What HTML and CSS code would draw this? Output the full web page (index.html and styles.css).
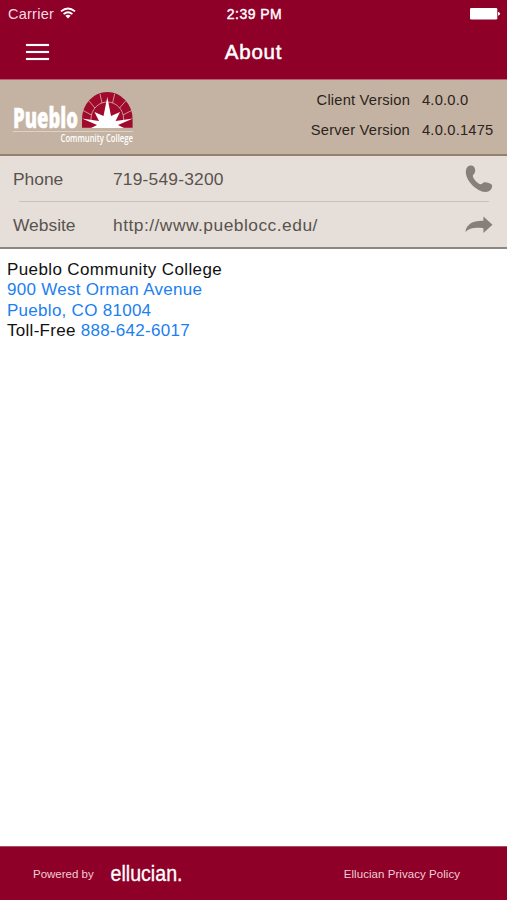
FILE: index.html
```html
<!DOCTYPE html>
<html lang="en">
<head>
    <meta charset="UTF-8">
    <meta name="viewport" content="width=device-width, initial-scale=1.0">
    <title>About</title>
    <link rel="stylesheet" href="styles.css">
</head>
<body>

<header class="top">
    <div class="status">
        <div class="carrier">
            <span class="carrier-name">Carrier</span>
            <svg class="wifi" width="16" height="12" viewBox="0 0 16 12" fill="none" stroke="#fff" stroke-width="1.9">
                <path d="M1 4.4 Q8 -1.6 15 4.4"/>
                <path d="M3.6 7.1 Q8 3.3 12.4 7.1"/>
                <path d="M8 11.4 L5.4 8.8 Q8 6.9 10.6 8.8 Z" fill="#fff" stroke="none"/>
            </svg>
        </div>
        <span class="time">2:39 PM</span>
        <svg class="battery" width="31" height="12" viewBox="0 0 31 12" fill="#fff">
            <rect x="0" y="0" width="27.3" height="11.6" rx="1.3"/>
            <path d="M28 3.8 Q30.2 4.6 30.2 5.8 Q30.2 7 28 7.8 Z"/>
        </svg>
    </div>
    <div class="nav">
        <div class="menu"><i></i><i></i><i></i></div>
        <h1>About</h1>
    </div>
</header>

<section class="banner">
    <svg class="logo" width="130" height="66" viewBox="0 0 130 66">
        <text class="logo-name" x="2" y="41.5" textLength="65" lengthAdjust="spacingAndGlyphs">Pueblo</text>
        <path d="M71 41.7 V33 A25.3 27 0 0 1 121.6 33 V41.7 Z" fill="#a00a2c"/>
        <g fill="none" stroke="#d6b9b0" stroke-width="0.8">
            <path d="M80 36 V33 A16.3 17 0 0 1 112.6 33 V36"/>
            <path d="M91 17 L89 8 M101.6 17 L103.6 8 M84 22 L77.5 14.5 M108.6 22 L115 14.5 M80.5 29 L72 24.5 M112 29 L120.6 24.5"/>
        </g>
        <path d="M80 41.9 L86 39 L71 32.5 L88 35 L83.5 26 L92.5 30 L96.3 11 L100 30 L109 26 L104.6 35 L122 32.5 L107 39 L113 41.9 Z" fill="#fff"/>
        <path d="M2 45.5 H122" stroke="#ddd0c4" stroke-width="1"/>
        <text class="logo-sub" x="49.5" y="55.5" textLength="72.5" lengthAdjust="spacingAndGlyphs">Community College</text>
    </svg>
    <div class="versions">
        <span class="label client">Client Version</span><span class="client-no">4.0.0.0</span>
        <span class="label server">Server Version</span><span class="server-no">4.0.0.1475</span>
    </div>
</section>

<section class="contact">
    <div class="row">
        <span class="name phone">Phone</span>
        <span class="value phone-no">719-549-3200</span>
        <svg width="28" height="30" viewBox="0 0 28 30" fill="#86807a">
            <path d="M2.2 3.2 C3.5 1.2 7.2 .8 8.8 2.5 C10.3 4.2 10.6 7 9.8 8.8 C9 10.3 7.7 10.9 7.9 12.4 C8.5 15.2 12.6 19.7 15.8 20.2 C17.2 20.3 17.8 18.6 19.2 18.3 C21.4 17.9 25 18.9 26.7 20.6 C27.9 22.6 26.3 26.2 24.2 27 C21.5 28.4 17.4 28.3 13.6 26 C7.6 22.6 2.4 16.4 1.2 11 C.5 7.8 .8 5 2.2 3.2 Z"/>
        </svg>
    </div>
    <div class="row">
        <span class="name website">Website</span>
        <span class="value url">http://www.pueblocc.edu/</span>
        <svg width="28" height="18" viewBox="0 0 28 18" fill="#86807a">
            <path d="M.4 16 C1.4 8.2 8 4.4 18.4 4.8 V.5 L27.5 8.7 L18.4 17 V12.3 C10 11.2 4.5 12 .4 16 Z"/>
        </svg>
    </div>
</section>

<main class="address">
    <div class="line1">Pueblo Community College</div>
    <div class="line2"><a>900 West Orman Avenue</a></div>
    <div class="line3"><a>Pueblo, CO 81004</a></div>
    <div class="line4">Toll-Free <a>888-642-6017</a></div>
</main>

<footer class="footer">
    <span class="powered">Powered by</span>
    <svg class="ellucian" width="90" height="32" viewBox="0 0 90 32">
        <text x="1.5" y="23" textLength="72" lengthAdjust="spacingAndGlyphs">ellucian.</text>
    </svg>
    <span class="privacy">Ellucian Privacy Policy</span>
</footer>

</body>
</html>
```
FILE: styles.css
```css
* {
    box-sizing: border-box;
}
body {
    margin: 0;
    height: 900px;
    display: flex;
    flex-direction: column;
    font-family: "Liberation Sans", Arial, sans-serif;
    background-color: #fff;
    color: #111;
}
.top {
    height: 80px;
    background-color: #8e0028;
    border-bottom: 1px solid #b9606f;
    color: #fff;
}
.status {
    height: 27px;
    display: grid;
    grid-template-columns: 1fr auto 1fr;
    align-items: center;
    padding: 1px 6px 0 8px;
}
.carrier {
    display: flex;
    align-items: center;
    gap: 6px;
    font-size: 14.5px;
    color: #f3dbe1;
    letter-spacing: 0.25px;
}
.wifi {
    margin-top: -2px;
}
.time {
    font-size: 14px;
    letter-spacing: 0.45px;
    -webkit-text-stroke: 0.4px #fff;
}
.battery {
    justify-self: end;
}
.nav {
    height: 50px;
    display: grid;
    grid-template-columns: 1fr auto 1fr;
    align-items: center;
}
.menu {
    display: flex;
    flex-direction: column;
    gap: 5px;
    margin-left: 26px;
}
.menu i {
    width: 23px;
    height: 2px;
    background-color: #fff;
    box-shadow: 0 0 1px #e0b4c0;
}
.nav h1 {
    margin: 0;
    font-size: 20.5px;
    font-weight: normal;
    letter-spacing: 0.8px;
    -webkit-text-stroke: 0.5px #fff;
}
.banner {
    height: 76px;
    display: flex;
    justify-content: space-between;
    padding: 6px 0 0 11px;
    background-color: #c4b3a2;
    border-bottom: 2px solid #93806f;
}
.logo-name {
    font-family: "Open Sans", sans-serif;
    font-size: 28.5px;
    font-weight: 800;
    fill: #fff;
    stroke: #fff;
    stroke-width: 0.4px;
}
.logo-sub {
    font-family: "Open Sans", sans-serif;
    font-size: 10.5px;
    font-weight: 600;
    fill: #fff;
}
.versions {
    display: grid;
    grid-template-columns: auto 73px;
    grid-auto-rows: 30px;
    column-gap: 12px;
    align-items: center;
    margin: -1px 12px 0 0;
    font-size: 14.7px;
    letter-spacing: 0.2px;
    color: #2b231d;
    white-space: nowrap;
}
.versions .label {
    text-align: right;
}
.contact {
    height: 93px;
    background-color: #e6dfd9;
    border-bottom: 2px solid #8d8782;
}
.row {
    height: 46px;
    display: flex;
    align-items: center;
    padding: 0 14px 0 13px;
    font-size: 17.4px;
    color: #58534e;
    background: linear-gradient(#c8c3b3, #c8c3b3) 19px 100% / 470px 1.5px no-repeat;
}
.row + .row {
    background: none;
}
.row .name,
.row .value {
    padding-top: 1px;
}
.row .name {
    width: 100px;
}
.row .value {
    flex: 1;
    letter-spacing: 0.2px;
}
.row .url {
    letter-spacing: 0.48px;
}
.address {
    flex: 1;
    padding: 11px 7px;
    font-size: 17px;
    line-height: 20.4px;
    letter-spacing: 0.28px;
}
.address .line1 {
    letter-spacing: 0.38px;
}
.address a {
    color: #1b80f0;
}
.footer {
    height: 54px;
    display: flex;
    align-items: center;
    padding: 0 47px 0 33px;
    background-color: #8e0028;
    border-top: 1px solid #a94c62;
    color: #f1cdd6;
    font-size: 11.5px;
}
.ellucian {
    margin: 0 auto 0 15px;
}
.ellucian text {
    font-size: 22px;
    fill: #fff;
    stroke: #fff;
    stroke-width: 0.3px;
}
.privacy {
    letter-spacing: 0.05px;
}
```
